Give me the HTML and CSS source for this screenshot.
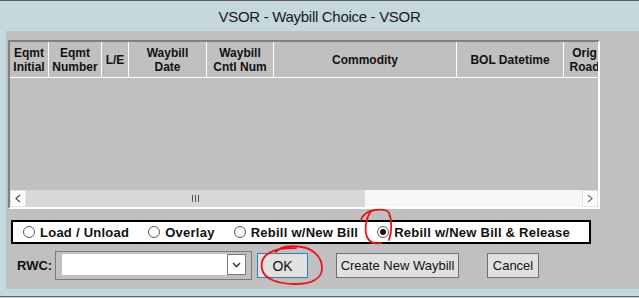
FILE: index.html
```html
<!DOCTYPE html>
<html lang="en">
<head>
    <meta charset="UTF-8">
    <title>VSOR - Waybill Choice - VSOR</title>
    <link rel="stylesheet" href="styles.css">
</head>
<body>
   <div class="topline"></div>
   <div class="titlebar">VSOR - Waybill Choice - VSOR</div>

   <div class="frame">
    <div class="grid">
        <div class="grid-head">
            <div class="col">Eqmt<br>Initial</div>
            <div class="col">Eqmt<br>Number</div>
            <div class="col">L/E</div>
            <div class="col">Waybill<br>Date</div>
            <div class="col">Waybill<br>Cntl Num</div>
            <div class="col">Commodity</div>
            <div class="col">BOL Datetime</div>
            <div class="col">Orig<br>Road</div>
        </div>
        <div class="grid-body"></div>
        <div class="hscroll">
            <div class="sbtn">
                <svg width="8" height="9" viewBox="0 0 8 9"><polyline points="6,1 2,4.5 6,8" fill="none" stroke="#555" stroke-width="1.3"/></svg>
            </div>
            <div class="thumb"><span></span><span></span><span></span></div>
            <div class="track"></div>
            <div class="sbtn">
                <svg width="8" height="9" viewBox="0 0 8 9"><polyline points="2,1 6,4.5 2,8" fill="none" stroke="#777" stroke-width="1.3"/></svg>
            </div>
        </div>
    </div>

    <div class="choices">
        <label class="choice"><span class="radio"></span>Load / Unload</label>
        <label class="choice"><span class="radio"></span>Overlay</label>
        <label class="choice"><span class="radio"></span>Rebill w/New Bill</label>
        <label class="choice"><span class="radio checked"></span>Rebill w/New Bill &amp; Release</label>
    </div>

    <div class="actions">
        <span class="rwc-label">RWC:</span>
        <div class="combo">
            <div class="combo-input"></div>
            <div class="combo-btn">
                <svg width="9" height="6" viewBox="0 0 9 6"><polyline points="1,1 4.5,4.5 8,1" fill="none" stroke="#444" stroke-width="1.6"/></svg>
            </div>
        </div>
        <button class="btn btn-ok">OK</button>
        <button class="btn btn-create">Create New Waybill</button>
        <button class="btn btn-cancel">Cancel</button>
    </div>
   </div>

   <div class="bottomline"></div>

   <svg class="marks" width="639" height="298" viewBox="0 0 639 298">
       <path d="M361,220 C363,214 368,211 375,210 C382,209 387,209 389,213 C392,220 392,232 389,240" fill="none" stroke="#e8141a" stroke-width="1.8" stroke-linecap="round"/>
       <path d="M371,211 C366,218 364,229 367,237 C370,243 376,244 381,243" fill="none" stroke="#e8141a" stroke-width="1.8" stroke-linecap="round"/>
       <path d="M276,252 C281,246 292,245 302,247 C314,249 322,258 322,268 C322,279 311,284 295,284 C278,284 264,279 262,269 C260,259 266,252 280,249 C286,248 292,248 296,248" fill="none" stroke="#e8141a" stroke-width="1.8" stroke-linecap="round"/>
   </svg>
</body>
</html>
```

FILE: styles.css
```css
body {
    margin: 0;
    padding: 0;
    width: 639px;
    height: 298px;
    overflow: hidden;
    position: relative;
    background-color: #c5d8de;
    font-family: "Liberation Sans", Arial, sans-serif;
    color: #111111;
}
.topline {
    height: 1px;
    background-color: #5c5c5c;
}
.titlebar {
    height: 30px;
    line-height: 32px;
    text-align: center;
    font-size: 15px;
    letter-spacing: -0.3px;
    color: #1a1a1a;
}
.frame {
    margin-left: 6px;
    height: 258px;
    padding: 9px 0 0 2px;
    box-sizing: border-box;
    background-color: #c0c0c0;
}

/* table */
.grid {
    width: 592px;
    height: 169px;
    box-sizing: border-box;
    border: 2px solid #ffffff;
    border-top-color: #808080;
    border-left-color: #808080;
    display: flex;
    flex-direction: column;
    overflow: hidden;
}
.grid-head {
    display: grid;
    grid-template-columns: 39px 53px 27px 78px 67px 183px 107px 42px;
    height: 35px;
    border-bottom: 1px solid #ffffff;
    overflow: hidden;
}
.grid-head .col {
    display: flex;
    align-items: center;
    justify-content: center;
    text-align: center;
    border-right: 1px solid #ffffff;
    font-size: 12px;
    font-weight: bold;
    line-height: 14px;
    white-space: nowrap;
}
.grid-body {
    flex: 1;
}
.hscroll {
    height: 17px;
    display: flex;
    background-color: #f0f0f0;
}
.sbtn {
    width: 16px;
    box-sizing: border-box;
    border: 1px solid #e2e2e2;
    background-color: #ffffff;
    display: flex;
    align-items: center;
    justify-content: center;
}
.thumb {
    width: 339px;
    background-color: #d8d8d8;
    display: flex;
    align-items: center;
    justify-content: center;
    gap: 2px;
}
.thumb span {
    width: 1px;
    height: 7px;
    background-color: #555555;
}
.track {
    flex: 1;
    background-color: #f7f7f7;
}

/* radio group */
.choices {
    margin: 11px 0 0 3px;
    width: 580px;
    height: 24px;
    box-sizing: border-box;
    border: 2px solid #000000;
    background-color: #ffffff;
    display: flex;
    align-items: center;
    padding-left: 10px;
    gap: 19px;
}
.choice {
    display: flex;
    align-items: center;
    gap: 5px;
    font-size: 13px;
    font-weight: bold;
    letter-spacing: 0.25px;
    white-space: nowrap;
}
.radio {
    width: 12px;
    height: 12px;
    box-sizing: border-box;
    border: 1px solid #5a5a5a;
    border-radius: 50%;
    background-color: #ffffff;
    display: flex;
    align-items: center;
    justify-content: center;
}
.radio.checked::after {
    content: "";
    width: 6px;
    height: 6px;
    border-radius: 50%;
    background-color: #111111;
}

/* bottom row */
.actions {
    display: flex;
    align-items: center;
    margin-top: 7px;
    padding-left: 9px;
}
.rwc-label {
    font-size: 13px;
    font-weight: bold;
    width: 38px;
}
.combo {
    width: 197px;
    height: 29px;
    box-sizing: border-box;
    border: 1px solid #7a7a7a;
    padding: 2px 5px 4px 6px;
    display: flex;
}
.combo-input {
    flex: 1;
    background-color: #ffffff;
}
.combo-btn {
    width: 19px;
    box-sizing: border-box;
    border: 1px solid #7a7a7a;
    background-color: #ffffff;
    display: flex;
    align-items: center;
    justify-content: center;
}
.btn {
    height: 25px;
    box-sizing: border-box;
    padding: 0;
    border: 1px solid #707070;
    background-color: #e1e1e1;
    font-family: "Liberation Sans", Arial, sans-serif;
    font-size: 13px;
    color: #111111;
}
.btn-ok {
    width: 51px;
    margin-left: 5px;
    border-color: #3d7bad;
    font-size: 14px;
}
.btn-create {
    width: 123px;
    margin-left: 28px;
}
.btn-cancel {
    width: 52px;
    margin-left: 28px;
}
.bottomline {
    margin-top: 7px;
    height: 1px;
    background-color: #646464;
}
.marks {
    position: absolute;
    left: 0;
    top: 0;
    pointer-events: none;
}
```
